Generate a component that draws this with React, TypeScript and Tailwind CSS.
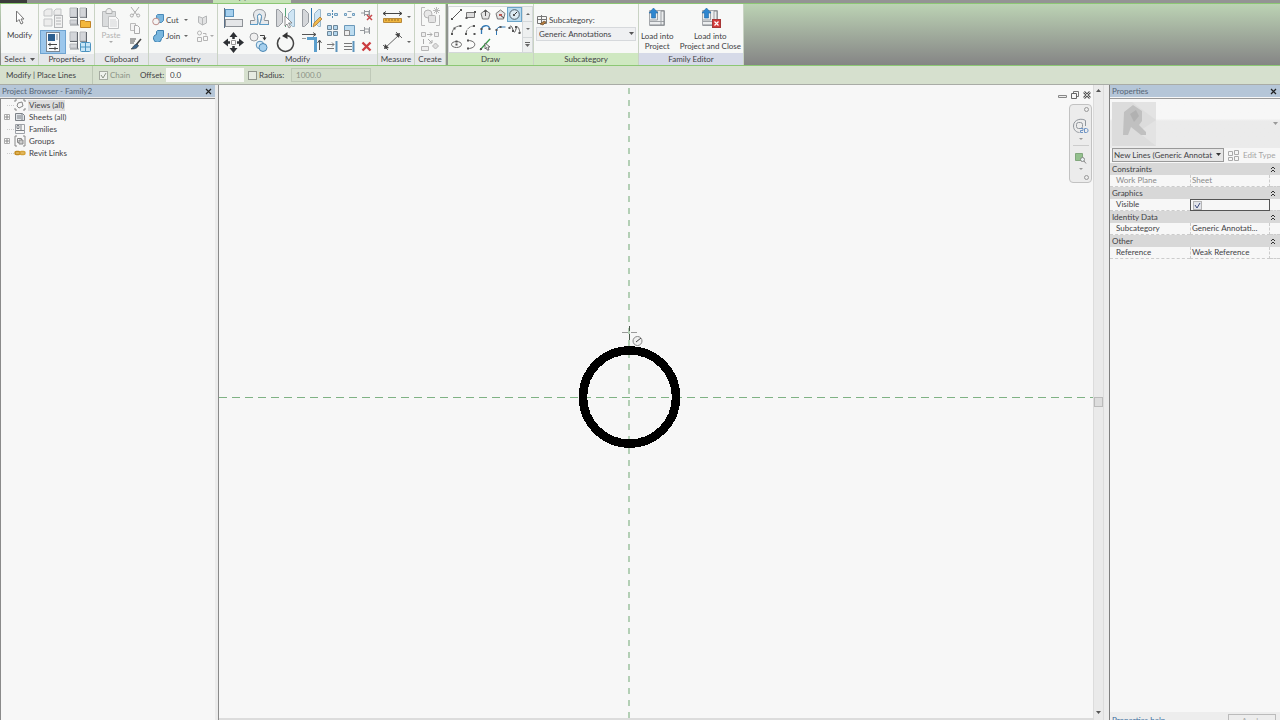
import type { ReactNode } from "react";

type IconProps = { w: number; h: number; children: ReactNode; className?: string };

const Icon = ({ w, h, children, className = "" }: IconProps) => (
  <svg width={w} height={h} viewBox={`0 0 ${w} ${h}`} fill="none" className={`shrink-0 ${className}`} aria-hidden="true">
    {children}
  </svg>
);

const Caret = ({ color = "#555" }: { color?: string }) => (
  <Icon w={5} h={3}>
    <path d="M0 0h5L2.5 3z" fill={color} />
  </Icon>
);

const SmallCaret = ({ color = "#666" }: { color?: string }) => (
  <Icon w={4} h={2}>
    <path d="M0 0h4L2 2z" fill={color} />
  </Icon>
);

type ToolProps = { label: string; className?: string; children: ReactNode };

const Tool = ({ label, className = "", children }: ToolProps) => (
  <button type="button" aria-label={label} className={`flex items-center justify-center ${className}`}>
    {children}
  </button>
);

type PanelProps = { title: ReactNode; width: string; tone?: string; children: ReactNode };

const Panel = ({ title, width, tone = "bg-[#e6e8ea]", children }: PanelProps) => (
  <section className={`flex shrink-0 flex-col border-r border-[#c9d3c4] bg-[#f7f8f7] ${width}`}>
    <div className="flex flex-1 justify-center pt-0.5">{children}</div>
    <h2 className={`flex h-3 items-center justify-center gap-1 leading-[11px] ${tone}`}>{title}</h2>
  </section>
);

/* ---------- ribbon icons ---------- */

const TypeGrid = ({ variant }: { variant: "folder" | "window" }) => (
  <Icon w={22} h={22}>
    <path d="M1 1h7v9H1zM11 1h6v9h-6zM1 13h7v4H1z" fill="#d3d5d9" stroke="#b4b7bb" />
    <path d="M8.500 1v17M17.500 1v10M1 10.500h8" stroke="#62666d" />
    <path d="M1 18h9M11 10.500h6" stroke="#8b8f95" />
    {variant === "folder" ? (
      <path d="M11.500 13.500h4l1 1h5v6h-10z" fill="#f3b73c" stroke="#c08526" />
    ) : (
      <>
        <rect x="11.500" y="11.500" width="10" height="9" rx="1" fill="#c8e6f7" stroke="#4b93c0" />
        <path d="M16.500 12v9M12 16h9" stroke="#4b93c0" />
      </>
    )}
  </Icon>
);

const FamilyTypes = () => (
  <Icon w={21} h={21}>
    <path d="M1 3l3-2h5v7H1zM11 3l2-2h5v6h-7zM1 11h8v7H1z" fill="#ececec" stroke="#c3c5c7" />
    <rect x="11.500" y="7.500" width="8" height="12" fill="#f1f1f1" stroke="#b3b5b7" />
    <path d="M13 10h5M13 13h5M13 16h5" stroke="#b3b5b7" />
  </Icon>
);

const PropertiesIcon = () => (
  <Icon w={16} h={20}>
    <rect x="1.500" y="0.500" width="13" height="19" fill="#f8fafc" stroke="#7b8793" />
    <rect x="3" y="2" width="7" height="7" fill="#2c5f90" />
    <path d="M11 3h2M11 5h2M11 7h2" stroke="#7a8794" />
    <path d="M3 12.500h9M5 10.800v3.400M4 16.500h9M10 14.800v3.400" stroke="#444" />
  </Icon>
);

const PasteIcon = () => (
  <Icon w={19} h={21}>
    <path d="M1.500 3.500h13v15h-13z" fill="#dadcdd" stroke="#b9bbbc" />
    <path d="M5 3.500c0-4 6-4 6 0v2H5z" fill="#eee" stroke="#aeb0b1" />
    <path d="M7.500 8.500h7l3 3v9h-10z" fill="#f8f8f8" stroke="#c0c2c3" />
    <path d="M9 12h6M9 14h7M9 16h7M9 18h7" stroke="#d3d5d6" />
  </Icon>
);

const Scissors = () => (
  <Icon w={12} h={12}>
    <path d="M2 1l6 8M10 1L4 9" stroke="#aaa" />
    <circle cx="2.800" cy="9.500" r="1.500" stroke="#aaa" />
    <circle cx="9.200" cy="9.500" r="1.500" stroke="#aaa" />
  </Icon>
);

const CopyIcon = () => (
  <Icon w={12} h={12}>
    <path d="M1.500 1.500h5v7h-5z" fill="#f3f3f3" stroke="#bbb" />
    <path d="M5.500 3.500h3l2 2v6h-5z" fill="#f8f8f8" stroke="#aaa" />
  </Icon>
);

const MatchIcon = () => (
  <Icon w={13} h={12}>
    <path d="M1 1h6M1 3h5M1 5h4" stroke="#555" />
    <path d="M12 1L7 7" stroke="#444" strokeWidth="1.500" />
    <path d="M8 6l1.500 1.500C8 11 5 11 2 11c2-1 2-4 6-5z" fill="#3d668e" stroke="#333" strokeWidth=".6" />
  </Icon>
);

const CutGeometry = () => (
  <Icon w={12} h={12}>
    <path d="M4.500 1.500l1-1h6v6l-2 2H5z" fill="#79b6de" stroke="#4a8ab8" />
    <circle cx="4" cy="7.500" r="3.300" fill="#f4f4f4" stroke="#bd8f8b" />
  </Icon>
);

const JoinGeometry = () => (
  <Icon w={12} h={12}>
    <path d="M4.500 1.500l1-1h6v6l-2 2a4 4 0 1 1-5-4z" fill="#79b6de" stroke="#3d7fae" />
  </Icon>
);

const CubeIcon = () => (
  <Icon w={12} h={12}>
    <path d="M2.500 2.500l4 1.500v7l-4-2.500zM6.500 4l4-2v7l-4 2z" fill="#e2e3e4" stroke="#b5b7b8" />
  </Icon>
);

const UnjoinIcon = () => (
  <Icon w={12} h={12}>
    <circle cx="3.500" cy="3" r="2" stroke="#b5b5b5" />
    <path d="M1.500 7.500h4v4h-4zM7.500 6.500h4v4h-4z" stroke="#b5b5b5" />
    <path d="M7 3.500h3v2" stroke="#b5b5b5" />
  </Icon>
);

const AlignIcon = () => (
  <Icon w={21} h={21}>
    <path d="M1.500 0v20" stroke="#5c7186" />
    <rect x="2.500" y="1.500" width="8" height="7" fill="#a6d0ee" stroke="#5a93bc" />
    <rect x="2.500" y="11.500" width="17" height="7" fill="#e4e6e8" stroke="#8e9297" />
  </Icon>
);

const OffsetIcon = () => (
  <Icon w={21} h={20}>
    <path d="M1.500 16.500v-4h4c1-1-1-3-1-5.500C4.500 3 7.500 1.500 10.500 1.500s6 1.500 6 5.500c0 2.500-2 4.500-1 5.500h4v4h-9c1-3 2-6 2-8 0-3-4-3-4 0s1 5 0 8z" fill="#e6e9ec" stroke="#8a8e93" />
    <path d="M1 16.500h7.500c1-3 0-5 0-8 0-3 4-3 4 0s-1 5-2 8H20" stroke="#5a9cc9" />
  </Icon>
);

const MirrorPick = () => (
  <Icon w={21} h={21}>
    <path d="M1.500 1.500h2l4 4v9l-4 4h-2z" fill="#d5d7da" stroke="#979ba0" />
    <path d="M19.500 1.500h-2l-4 4v9l4 4h2z" fill="#cfe5f4" stroke="#9ab7ca" />
    <path d="M10.500 0v19" stroke="#56a478" />
    <path d="M10 8l7 7h-3.500l2 4-1.500 1-2-4-2 2z" fill="#fff" stroke="#777" strokeWidth=".8" />
  </Icon>
);

const MirrorDraw = () => (
  <Icon w={21} h={21}>
    <path d="M1.500 1.500h2l4 4v9l-4 4h-2z" fill="#d5d7da" stroke="#979ba0" />
    <path d="M19.500 1.500h-2l-4 4v9l4 4h2z" fill="#cfe5f4" stroke="#9ab7ca" />
    <path d="M10.500 0v19" stroke="#2d77b0" />
    <path d="M12 19l1-4 6-6 2 2-6 6z" fill="#f2ba4c" stroke="#a87a38" strokeWidth=".8" />
  </Icon>
);

const MoveIcon = () => (
  <Icon w={21} h={21}>
    <path d="M10.500 3v4M10.500 14v4M3 10.500h4M14 10.500h4" stroke="#2d3034" strokeWidth="2.500" />
    <path d="M10.500 0l4 5h-8zM10.500 21l4-5h-8zM0 10.500l5-4v8zM21 10.500l-5-4v8z" fill="#2d3034" />
    <path d="M8.500 8.500h4v4h-4z" fill="#fff" stroke="#999" />
  </Icon>
);

const CopyTool = () => (
  <Icon w={20} h={21}>
    <circle cx="5" cy="5" r="4" fill="#f0f0f0" stroke="#999ca0" />
    <path d="M11 3.500h4.500v3" stroke="#444" />
    <path d="M13.500 5.500h4l-2 3z" fill="#333" />
    <circle cx="11" cy="13" r="3.800" fill="#d9ecf8" stroke="#5a93bc" />
    <circle cx="14" cy="15.500" r="4" fill="#a6d0ee" stroke="#4b87b3" />
  </Icon>
);

const RotateIcon = () => (
  <Icon w={20} h={21}>
    <path d="M5 5.500a8 8 0 1 0 7-2" stroke="#444" strokeWidth="1.500" />
    <path d="M7 4L12.500 0v7z" fill="#333" />
  </Icon>
);

const TrimIcon = () => (
  <Icon w={21} h={21}>
    <path d="M1 2.500h14M12 .5l3 2-3 2" stroke="#555" />
    <path d="M6 6.500h8.500V20" stroke="#5b9fcd" strokeWidth="3" />
    <path d="M1 6.500h4" stroke="#999" />
    <path d="M18.500 18V8M16.500 11l2-3 2 3" stroke="#555" />
  </Icon>
);

const small: { label: string; art: ReactNode }[] = [
  { label: "Split Element", art: <><path d="M6.500 2v9" stroke="#4e87b0" strokeDasharray="2 1" /><path d="M1.500 5.500h3v2h-3zM8.500 5.500h3v2h-3z" fill="#cfe5f4" stroke="#6f9cbd" /></> },
  { label: "Split with Gap", art: <><path d="M1.500 5.500h2v2h-2zM9.500 5.500h2v2h-2z" fill="#cfe5f4" stroke="#6f9cbd" /><path d="M4.500 3.500h4M4.500 9.500h4" stroke="#8ea3b3" /></> },
  { label: "Unpin", art: <><path d="M1 5h3M4.500 2v6M5 3.500h4v3H5M9.500 2v6" stroke="#94989c" /><path d="M7 7l5 5M12 7l-5 5" stroke="#c8494b" strokeWidth="1.500" /></> },
  { label: "Array", art: <path d="M1.500 1.500h4v4h-4zM7.500 1.500h4v4h-4zM1.500 7.500h4v4h-4zM7.500 7.500h4v4h-4z" fill="#b5d7ee" stroke="#6c8799" /> },
  { label: "Scale", art: <><path d="M1.500 1.500h10v10h-10z" fill="#bcdcf0" stroke="#6a99ba" /><path d="M1.500 6.500h5v5h-5z" fill="#eee" stroke="#888" /></> },
  { label: "Pin", art: <path d="M0 6.500h4M4.500 3v7M5 5h4v3H5M9.500 3v7" stroke="#94989c" /> },
  { label: "Trim Single", art: <><path d="M10.500 1v11" stroke="#5b93bb" strokeWidth="2" /><path d="M1 4.500h7M1 8.500h7M6 2.500l2 2-2 2" stroke="#777" /></> },
  { label: "Trim Multiple", art: <><path d="M10.500 1v11" stroke="#5b93bb" strokeWidth="2" /><path d="M1 3.500h8M1 6.500h8M1 9.500h8" stroke="#777" /></> },
  { label: "Delete", art: <path d="M2.500 2.500l8 8M10.500 2.500l-8 8" stroke="#cb3d40" strokeWidth="2.400" /> },
];

const dot = (x: number, y: number) => <rect x={x - 1} y={y - 1} width="2" height="2" fill="#555" />;

const shapes: { label: string; art: ReactNode }[] = [
  { label: "Line", art: <><path d="M2 11L11 2" stroke="#555" />{dot(2, 11)}{dot(11, 2)}</> },
  { label: "Rectangle", art: <><path d="M2.500 4.500h8v5h-8z" fill="#ddd" stroke="#777" />{dot(2.500, 10)}{dot(11, 4)}</> },
  { label: "Inscribed Polygon", art: <><path d="M6.500 2l4.500 3.500-1.500 5.500h-6L2 5.500z" fill="#e6e6e6" stroke="#777" /><path d="M6.500 8V2M5 4l1.500-2L8 4" stroke="#555" /></> },
  { label: "Circumscribed Polygon", art: <><path d="M6.500 2l4.500 3.500-1.500 5.500h-6L2 5.500z" fill="#e6e6e6" stroke="#777" /><path d="M6 7l4 3" stroke="#444" /><rect x="5" y="6" width="3" height="2" fill="#bb5551" /></> },
  { label: "Circle", art: <><circle cx="6.500" cy="6.500" r="4.800" fill="#dcebf3" stroke="#4e5e6b" /><path d="M6 7l3-3" stroke="#333" />{dot(6, 7)}</> },
  { label: "Start-End-Radius Arc", art: <><path d="M2 11c0-4 3-8 8-8" stroke="#777" />{dot(2, 11)}{dot(10.500, 3)}{dot(4.500, 5.500)}</> },
  { label: "Center-ends Arc", art: <><path d="M2 11c0-4 3-8 8-8" stroke="#777" strokeDasharray="4 1" />{dot(2, 11)}{dot(10.500, 11)}{dot(10, 3)}</> },
  { label: "Tangent End Arc", art: <><path d="M2.500 11V7c0-5 8-6 8-1" stroke="#3278b4" strokeWidth="1.300" />{dot(10.500, 6)}{dot(2.500, 6)}</> },
  { label: "Fillet Arc", art: <><path d="M2.500 12V8c0-3 2-4 4-4h5" stroke="#3278b4" />{dot(2.500, 7)}{dot(6.500, 4)}</> },
  { label: "Spline", art: <><path d="M1 5c2-4 3-1 4 2s2 3 3-1 3-2 4 4" stroke="#555" />{dot(1.500, 5)}{dot(5, 8)}{dot(8, 4)}{dot(11.500, 10)}</> },
  { label: "Ellipse", art: <><ellipse cx="6.500" cy="6.500" rx="5" ry="3" stroke="#666" />{dot(6.500, 6.500)}{dot(6.500, 3.500)}</> },
  { label: "Partial Ellipse", art: <><path d="M4 2.500c9 0 9 8 0 8" stroke="#666" />{dot(4, 2.500)}{dot(4, 10.500)}</> },
  { label: "Pick Lines", art: <><path d="M1 12L11 1" stroke="#3a9a48" strokeWidth="1.300" />{dot(2, 11)}<path d="M6 5l5 4H9l1 3H8L7.500 9.500 6 11z" fill="#eee" stroke="#444" strokeWidth=".7" /></> },
];

const LoadIcon = ({ close }: { close?: boolean }) => (
  <Icon w={21} h={21}>
    <path d="M2.500 2.500h15v15h-15z" fill="#eceeef" stroke="#a5a8ac" />
    <path d="M10.500 3v9H3M14 3v14M3 13.500h14" stroke="#9ea2a6" />
    <path d="M14 3h3v14H3" stroke="#85898d" />
    <path d="M6.500 0L11 5H8.500v5h-4V5H2z" fill="#2f86cf" stroke="#2068a6" strokeWidth=".6" />
    {close && (
      <>
        <rect x="12.500" y="11.500" width="8" height="8" fill="#d33a3a" stroke="#a63636" />
        <path d="M14.500 13.500l4 4M18.500 13.500l-4 4" stroke="#fff" strokeWidth="1.200" />
      </>
    )}
  </Icon>
);

const Ribbon = () => (
  <div className="flex h-[62px] shrink-0 border-b border-[#8cc774] bg-linear-to-b from-[#bcd3b4] to-[#858585] pl-px">
    <Panel title={<>Select <Caret /></>} width="w-[38px]">
      <button type="button" className="flex flex-col items-center gap-1 self-start pt-1">
        <Icon w={11} h={15}>
          <path d="M2.500 1v11l2.500-2.500 2 4.500 2-1-2-4h3z" fill="#fff" stroke="#777" />
        </Icon>
        Modify
      </button>
    </Panel>
    <Panel title="Properties" width="w-[56px]">
      <div className="grid grid-cols-2 content-start gap-x-px">
        <Tool label="Family Types" className="h-6 w-[26px]"><FamilyTypes /></Tool>
        <Tool label="Family Category" className="h-6 w-[26px]"><TypeGrid variant="folder" /></Tool>
        <Tool label="Properties" className="h-6 w-[26px] border border-[#6fa3d0] bg-[#9cc7ec]"><PropertiesIcon /></Tool>
        <Tool label="Type Properties" className="h-6 w-[26px]"><TypeGrid variant="window" /></Tool>
      </div>
    </Panel>
    <Panel title="Clipboard" width="w-[54px]">
      <div className="flex items-start gap-2">
        <button type="button" className="flex flex-col items-center pt-0.5 text-[#b2b2b2]">
          <PasteIcon />
          <span>Paste</span>
          <SmallCaret color="#aaa" />
        </button>
        <div className="flex flex-col gap-1">
          <Tool label="Cut to Clipboard"><Scissors /></Tool>
          <Tool label="Copy to Clipboard"><CopyIcon /></Tool>
          <Tool label="Match Type"><MatchIcon /></Tool>
        </div>
      </div>
    </Panel>
    <Panel title="Geometry" width="w-[69px]">
      <div className="flex w-full flex-col gap-1 pt-2 pl-[3px]">
        <div className="flex items-center">
          <button type="button" className="flex w-9 items-center gap-0.5"><CutGeometry />Cut<span className="ml-auto"><SmallCaret /></span></button>
          <Tool label="Cope" className="ml-2"><CubeIcon /></Tool>
        </div>
        <div className="flex items-center">
          <button type="button" className="flex w-9 items-center gap-0.5"><JoinGeometry />Join<span className="ml-auto"><SmallCaret /></span></button>
          <Tool label="Wall Joins" className="ml-2 gap-0.5"><UnjoinIcon /><SmallCaret color="#aaa" /></Tool>
        </div>
      </div>
    </Panel>
    <Panel title="Modify" width="w-[160px]">
      <div className="flex items-start">
        <div className="grid grid-cols-4">
          <Tool label="Align" className="h-6 w-[26px]"><AlignIcon /></Tool>
          <Tool label="Offset" className="h-6 w-[26px]"><OffsetIcon /></Tool>
          <Tool label="Mirror Pick Axis" className="h-6 w-[26px]"><MirrorPick /></Tool>
          <Tool label="Mirror Draw Axis" className="h-6 w-[26px]"><MirrorDraw /></Tool>
          <Tool label="Move" className="h-6 w-[26px]"><MoveIcon /></Tool>
          <Tool label="Copy" className="h-6 w-[26px]"><CopyTool /></Tool>
          <Tool label="Rotate" className="h-6 w-[26px]"><RotateIcon /></Tool>
          <Tool label="Trim to Corner" className="h-6 w-[26px]"><TrimIcon /></Tool>
        </div>
        <div className="grid grid-cols-3">
          {small.map((s) => (
            <Tool key={s.label} label={s.label} className="h-4 w-[17px]"><Icon w={13} h={13}>{s.art}</Icon></Tool>
          ))}
        </div>
      </div>
    </Panel>
    <Panel title="Measure" width="w-[37px]">
      <div className="flex flex-col gap-1">
        <Tool label="Measure" className="gap-1">
          <Icon w={21} h={21}>
            <path d="M1 7.500h19M4 5.500l-3 2 3 2M17 5.500l3 2-3 2" stroke="#444" />
            <path d="M1.500 12.500h18v4h-18z" fill="#f0b63f" stroke="#b8893a" />
            <path d="M4 13v2M7 13v2M10 13v2M13 13v2M16 13v2" stroke="#9a6c20" />
          </Icon>
          <SmallCaret />
        </Tool>
        <Tool label="Aligned Dimension" className="gap-1">
          <Icon w={21} h={21}>
            <path d="M3 17L17 4M1 14l5 5M14 1l6 6" stroke="#666" />
            <path d="M2 18l1-5 4 4zM18 2l-5 1 4 4z" fill="#444" />
          </Icon>
          <SmallCaret />
        </Tool>
      </div>
    </Panel>
    <Panel title="Create" width="w-[31px]">
      <div className="flex flex-col gap-1">
        <Tool label="Create Group">
          <Icon w={21} h={21}>
            <path d="M5 1.500H1.500v18H5M16 19.500h3.500V9" stroke="#bbb" />
            <circle cx="8" cy="8" r="4" fill="#e8e8e8" stroke="#b5b5b5" />
            <rect x="8.500" y="9.500" width="7" height="7" rx="1" fill="#e3e3e3" stroke="#b5b5b5" />
            <path d="M16.500 1v7M13 4.500h7M14 2l5 5M19 2l-5 5" stroke="#b8b8b8" />
          </Icon>
        </Tool>
        <Tool label="Create Similar">
          <Icon w={21} h={21}>
            <path d="M1.500 1.500h4v4h-4zM14.500 1.500h4v4h-4zM1.500 15.500h7v4h-7z" fill="#eee" stroke="#b5b5b5" />
            <path d="M7 3.500h5M10 1.500l2 2-2 2M3.500 8v5M8 8l4 4M12 9v3H9" stroke="#aaa" />
            <path d="M15.500 12l3 3-3 3-3-3z" fill="#ddd" stroke="#b5b5b5" />
          </Icon>
        </Tool>
      </div>
    </Panel>
    <div className="w-0.5 bg-[#8f948d]" />
    <Panel title="Draw" width="w-[86px]" tone="bg-[#cfe8c1]">
      <div className="flex w-full self-start border border-[#d4d8da] bg-[#fafbfa]">
        <div className="grid flex-1 grid-cols-5">
          {shapes.map((s) => (
            <Tool
              key={s.label}
              label={s.label}
              className={s.label === "Circle" ? "h-[15px] border border-[#6aa5c9] bg-[#b9dbee]" : "h-[15px]"}
            >
              <Icon w={13} h={13}>{s.art}</Icon>
            </Tool>
          ))}
        </div>
        <div className="flex w-[10px] flex-col border-l border-[#d4d8da] bg-[#eef0f0]">
          <Tool label="Scroll up" className="flex-1 border-b border-[#d4d8da]"><span className="rotate-180"><SmallCaret /></span></Tool>
          <Tool label="Scroll down" className="flex-1 border-b border-[#d4d8da]"><SmallCaret /></Tool>
          <Tool label="Expand" className="flex-1 flex-col gap-px"><span className="h-px w-[5px] bg-[#666]" /><Caret color="#666" /></Tool>
        </div>
      </div>
    </Panel>
    <Panel title="Subcategory" width="w-[105px]" tone="bg-[#cfe8c1]">
      <div className="flex w-full flex-col gap-px px-0.5 pt-2">
        <label htmlFor="subcategory" className="flex items-center gap-0.5">
          <Icon w={11} h={12}>
            <path d="M1.500 2.500h9v7h-9zM5.500 1v8M1.500 5.500h9" stroke="#777" />
            <path d="M4 10l4-3 2 1-3 3z" fill="#b57b3c" stroke="#5c4020" strokeWidth=".6" />
          </Icon>
          Subcategory:
        </label>
        <div className="relative">
          <select id="subcategory" className="h-[14px] w-full appearance-none border border-[#d6d9dc] bg-[#eff0f2] pl-0.5">
            <option>Generic Annotations</option>
          </select>
          <span className="pointer-events-none absolute top-[5px] right-0.5"><Caret /></span>
        </div>
      </div>
    </Panel>
    <Panel title="Family Editor" width="w-[105px]" tone="bg-[#d6dae8]">
      <div className="flex w-full items-start justify-between px-0.5 pt-0.5">
        <button type="button" className="flex flex-col items-center leading-[10px]">
          <LoadIcon />
          <span className="mt-0.5">Load into<br />Project</span>
        </button>
        <button type="button" className="flex flex-col items-center leading-[10px]">
          <LoadIcon close />
          <span className="mt-0.5">Load into<br />Project and Close</span>
        </button>
      </div>
    </Panel>
  </div>
);

const OptionsBar = () => (
  <div className="flex h-[19px] shrink-0 items-center border-b border-[#a9aca6] bg-[#d6e0ce] pl-1.5">
    <span className="w-[86px]">Modify | Place Lines</span>
    <div className="flex h-full w-12 items-center gap-0.5 border-l border-[#bcc7b5] pl-1.5 text-[#8b9286]">
      <span className="relative flex">
        <input id="chain" type="checkbox" defaultChecked disabled className="size-[9px] appearance-none border border-[#a4aaa0] bg-[#eef1ec]" />
        <svg className="absolute inset-0 size-[9px]" viewBox="0 0 9 9" fill="none"><path d="M2 4l2 3 3-5" stroke="#8b9286" /></svg>
      </span>
      <label htmlFor="chain">Chain</label>
    </div>
    <label htmlFor="offset" className="w-[26px]">Offset:</label>
    <input id="offset" defaultValue="0.0" className="h-[14px] w-[78px] bg-[#f8f9f7] pl-1" />
    <input id="use-radius" type="checkbox" className="ml-1 size-[9px] appearance-none border border-[#8f958c] bg-[#e6ebe2]" />
    <label htmlFor="use-radius" className="ml-0.5 w-8">Radius:</label>
    <input aria-label="Radius value" defaultValue="1000.0" disabled className="h-[14px] w-[80px] border border-[#bfc9b8] bg-[#d3ddcb] pl-1 text-[#8b9286]" />
  </div>
);

/* ---------- project browser ---------- */

const tree: { name: string; expandable?: boolean; art: ReactNode }[] = [
  { name: "Views (all)", art: <><path d="M3 1H1v2M9 1h2v2M1 9v2h2M11 9v2H9" stroke="#888" /><path d="M4 4l4-1 1 4-4 2-2-2z" stroke="#888" /></> },
  { name: "Sheets (all)", expandable: true, art: <><path d="M1.500 2.500h7l2 2v5h-9z" fill="#e0e4e8" stroke="#7c8187" /><path d="M3 5h4M3 7h4M8 3v6" stroke="#7c8187" /></> },
  { name: "Families", art: <><path d="M1.500 1.500h9v9h-9z" stroke="#9da1a7" /><path d="M3 2.500h2v3H3zM7 2v5M2 7.500h8" stroke="#7c8187" /></> },
  { name: "Groups", expandable: true, art: <><path d="M3 1H1v10h2M9 1h2v10H9" stroke="#888" /><path d="M3.500 3.500h4v4h-4z" stroke="#888" /><path d="M5 5h4v4H5z" fill="#ccc" stroke="#888" /></> },
  { name: "Revit Links", art: <><rect x="1" y="4.500" width="5" height="3" rx="1.500" fill="#e4bd6a" stroke="#c38a1d" strokeWidth="1.500" /><rect x="6" y="4.500" width="5" height="3" rx="1.500" fill="#e4bd6a" stroke="#d5a238" strokeWidth="1.500" /></> },
];

const PaneTitle = ({ children }: { children: ReactNode }) => (
  <div className="flex h-3 shrink-0 items-center justify-between bg-[#b5c6d8] pr-[3px] pl-0.5 text-[#566575]">
    <h2>{children}</h2>
    <button type="button" aria-label="Close">
      <Icon w={7} h={7}><path d="M1 1l5 5M6 1L1 6" stroke="#222" strokeWidth="1.200" /></Icon>
    </button>
  </div>
);

const ProjectBrowser = () => (
  <aside className="flex w-[215px] shrink-0 flex-col">
    <PaneTitle>Project Browser - Family2</PaneTitle>
    <ul className="mt-px flex-1 border-t border-l border-[#8a8a8a] bg-[#f7f7f7] pl-[3px]">
      {tree.map((item) => (
        <li key={item.name} className="flex h-3 items-center">
          <span className="flex w-2.5 items-center">
            {item.expandable ? (
              <Icon w={6} h={6}><path d="M.5.5h5v5h-5z" fill="#fff" stroke="#aaa" /><path d="M1 3h4M3 1v4" stroke="#888" /></Icon>
            ) : (
              <span className="ml-[3px] w-[7px] border-t border-dotted border-[#ccc]" />
            )}
          </span>
          <Icon w={12} h={12}>{item.art}</Icon>
          <span className={item.name === "Views (all)" ? "ml-0.5 bg-[#dedede] px-px leading-[11px]" : "ml-0.5 px-px"}>{item.name}</span>
        </li>
      ))}
    </ul>
  </aside>
);

/* ---------- drawing area ---------- */

const NavBar = () => (
  <div className="absolute top-[19px] right-px flex h-[79px] w-[23px] flex-col items-center justify-between rounded border border-[#c2c2c2] bg-[#ececec] py-0.5">
    <span className="mr-0.5 size-[5px] self-end rounded-full border border-[#999]" />
    <Tool label="Steering Wheel" className="flex-col gap-1">
      <Icon w={17} h={16}>
        <path d="M13.500 8V2.500C10 0 1.500 1 1.500 8c0 4 3 6.500 6 6.500" stroke="#91969c" />
        <rect x="4.500" y="4.500" width="6" height="6" rx="2" stroke="#91969c" />
        <path d="M8 10.500h3v2H8.500v2H11M12.500 10.500h2l1.500 1v2l-1.500 1h-2z" stroke="#6f94c4" />
      </Icon>
      <SmallCaret color="#999" />
    </Tool>
    <span className="h-px w-4 bg-[#ccc]" />
    <Tool label="Zoom" className="flex-col gap-1">
      <Icon w={13} h={12}>
        <path d="M1.500 1.500h7v7h-7z" fill="#93c08d" stroke="#81a77c" />
        <circle cx="8.500" cy="7.500" r="2" fill="#e8f2f2" stroke="#888" />
        <path d="M10 9l2 2.500" stroke="#888" />
      </Icon>
      <SmallCaret color="#999" />
    </Tool>
    <span className="mr-0.5 size-[5px] self-end rounded-full border border-[#999]" />
  </div>
);

const DrawingArea = () => (
  <main className="relative ml-[3px] flex min-w-0 flex-1 flex-col border-l border-[#8a8a8a] bg-[#f7f7f7]">
    <svg className="min-h-0 w-full flex-1" fill="none" aria-label="Drawing">
      <line x1="0" x2="100%" y1="312.500" y2="312.500" stroke="#7fb284" strokeDasharray="8 5" />
      <line x1="410" x2="410" y1="3" y2="100%" stroke="#b3cfb5" strokeWidth="2" strokeDasharray="6 6" />
      <circle cx="410.500" cy="312" r="46.500" stroke="#000" strokeWidth="8.500" shapeRendering="crispEdges" />
      <path d="M403 247.500h6M412 247.500h6" stroke="#999" />
      <path d="M410.500 241v5M410.500 249v6" stroke="#4b5a4b" />
      <circle cx="418.500" cy="256" r="4.500" fill="#f1f1f1" stroke="#888" />
      <path d="M417 257l5-4" stroke="#444" />
    </svg>
    <div className="h-0.5 bg-[#dcdcdc]" />
    <div className="absolute top-1.5 right-0.5 flex items-center gap-1">
      <Tool label="Minimize"><Icon w={9} h={8}><path d="M.5 4.500h8v2h-8z" fill="#eee" stroke="#888" /></Icon></Tool>
      <Tool label="Restore"><Icon w={8} h={8}><path d="M2.500.5h5v5h-5z" stroke="#777" /><path d="M.5 2.500h5v5h-5z" fill="#f7f7f7" stroke="#666" /></Icon></Tool>
      <Tool label="Close view"><Icon w={8} h={8}><path d="M1 1l6 6M7 1L1 7" stroke="#555" strokeWidth="2.500" /><path d="M1 1l6 6M7 1L1 7" stroke="#eee" strokeWidth=".8" /></Icon></Tool>
    </div>
    <NavBar />
  </main>
);

const ScrollBar = () => (
  <div className="mr-[5px] flex w-[11px] shrink-0 flex-col items-center justify-between border-x border-[#dcdcdc] bg-[#eaeaea] pt-1 pb-1.5">
    <Tool label="Scroll view up"><span className="rotate-180"><Caret /></span></Tool>
    <Tool label="Scroll thumb" className="h-2.5 w-[9px] border border-[#bbb] bg-[#ddd]">{null}</Tool>
    <Tool label="Scroll view down"><Caret /></Tool>
  </div>
);

/* ---------- properties ---------- */

const groups = [
  { title: "Constraints", name: "Work Plane", value: "Sheet", muted: true },
  { title: "Graphics", name: "Visible", value: null },
  { title: "Identity Data", name: "Subcategory", value: "Generic Annotati..." },
  { title: "Other", name: "Reference", value: "Weak Reference" },
];

const Properties = () => (
  <aside className="flex w-[171px] shrink-0 flex-col border-l border-[#7f7f7f] bg-[#f7f7f7]">
    <PaneTitle>Properties</PaneTitle>
    <button type="button" aria-label="Type selector" className="mt-px flex h-[50px] shrink-0 items-center justify-between border-t border-[#999] bg-linear-to-b from-[#f7f7f7] from-40% to-[#ebebeb] to-45% px-0.5">
      <Icon w={44} h={44}>
        <rect width="44" height="44" fill="#dcdcdc" />
        <path d="M0 0h44v44L26 30 44 18 20 0z" fill="#e3e3e3" />
        <path d="M12 10l9-7 9 6v10l-3 4 7 7v3h-5l-10-8-3 8h-5z" fill="#c0c0c0" />
        <path d="M18 12l6-4 3 6-5 6z" fill="#b1b1b1" />
      </Icon>
      <Caret color="#999" />
    </button>
    <div className="flex h-[14px] shrink-0 items-end gap-1 pl-0.5">
      <div className="relative">
        <select aria-label="Type filter" className="block h-[14px] w-[112px] appearance-none border border-[#999] bg-[#e6e6e6] pr-2 pl-px">
          <option>New Lines (Generic Annotat</option>
        </select>
        <span className="pointer-events-none absolute top-[5px] right-[3px]"><Caret color="#333" /></span>
      </div>
      <button type="button" className="flex h-[14px] items-center gap-1 text-[#a5a5a5]">
        <Icon w={11} h={11}><path d="M.5 1.500h4v4h-4zM6.500.5h4v4h-4zM.5 7.500h4v3h-4zM6.500 6.500h4v4h-4z" stroke="#aaa" /></Icon>
        Edit Type
      </button>
    </div>
    <table className="mt-px w-full table-fixed border-separate border-spacing-0 text-left leading-[11px]">
      <colgroup>
        <col className="w-[80px]" />
        <col />
        <col className="w-2.5" />
      </colgroup>
      {groups.map((g) => (
        <tbody key={g.title}>
          <tr className="h-3 bg-[#d8d8d8]">
            <th colSpan={2} className="p-0 pl-0.5 font-normal">{g.title}</th>
            <td className="p-0">
              <button type="button" aria-label={`Collapse ${g.title}`} className="flex">
                <Icon w={6} h={7}><path d="M1 3l2-2 2 2M1 6l2-2 2 2" stroke="#333" /></Icon>
              </button>
            </td>
          </tr>
          <tr className={g.muted ? "h-3 text-[#8a8a8a]" : "h-3"}>
            <th className="border-b border-dashed border-[#ccc] p-0 pl-1.5 font-normal">{g.name}</th>
            {g.value ? (
              <td className="border-x border-b border-dashed border-[#ccc] p-0 pl-px">{g.value}</td>
            ) : (
              <td className="border border-[#555] p-0 pl-0.5">
                <span className="relative flex">
                  <input type="checkbox" aria-label="Visible" defaultChecked className="size-[9px] appearance-none border border-[#b5b5b5] bg-[#e2e4ea]" />
                  <svg className="absolute inset-0 size-[9px]" viewBox="0 0 9 9" fill="none"><path d="M2 4l2 3 3-5" stroke="#3d4c7c" /></svg>
                </span>
              </td>
            )}
            <td className="border-b border-dashed border-[#ccc] p-0" />
          </tr>
        </tbody>
      ))}
    </table>
    <div className="mt-auto flex h-2 shrink-0 justify-between overflow-hidden bg-[#ededed] pt-0.5 pr-1 pl-0.5">
      <a href="#help" className="text-[#3c6f9f] underline">Properties help</a>
      <button type="button" className="h-3.5 w-12 shrink-0 border border-[#bbb] text-[#aaa]">Apply</button>
    </div>
  </aside>
);

const App = () => {
  return (
    <div className="flex h-screen flex-col overflow-hidden bg-[#ececec] font-['Lato','Noto_Sans',sans-serif] text-[8px] leading-3 text-[#3f4245]">
      <nav className="flex h-1 shrink-0 items-end overflow-hidden border-b border-[#8cc774] bg-[#949494]">
        <span className="h-full w-[27px] bg-[#3b3b3b]" />
        <a href="#modify" className="ml-[186px] w-[78px] bg-[#c5e3b6] text-center">Modify | Place Lines</a>
      </nav>
      <Ribbon />
      <OptionsBar />
      <div className="flex min-h-0 flex-1">
        <ProjectBrowser />
        <DrawingArea />
        <ScrollBar />
        <Properties />
      </div>
    </div>
  );
};

export default App;
